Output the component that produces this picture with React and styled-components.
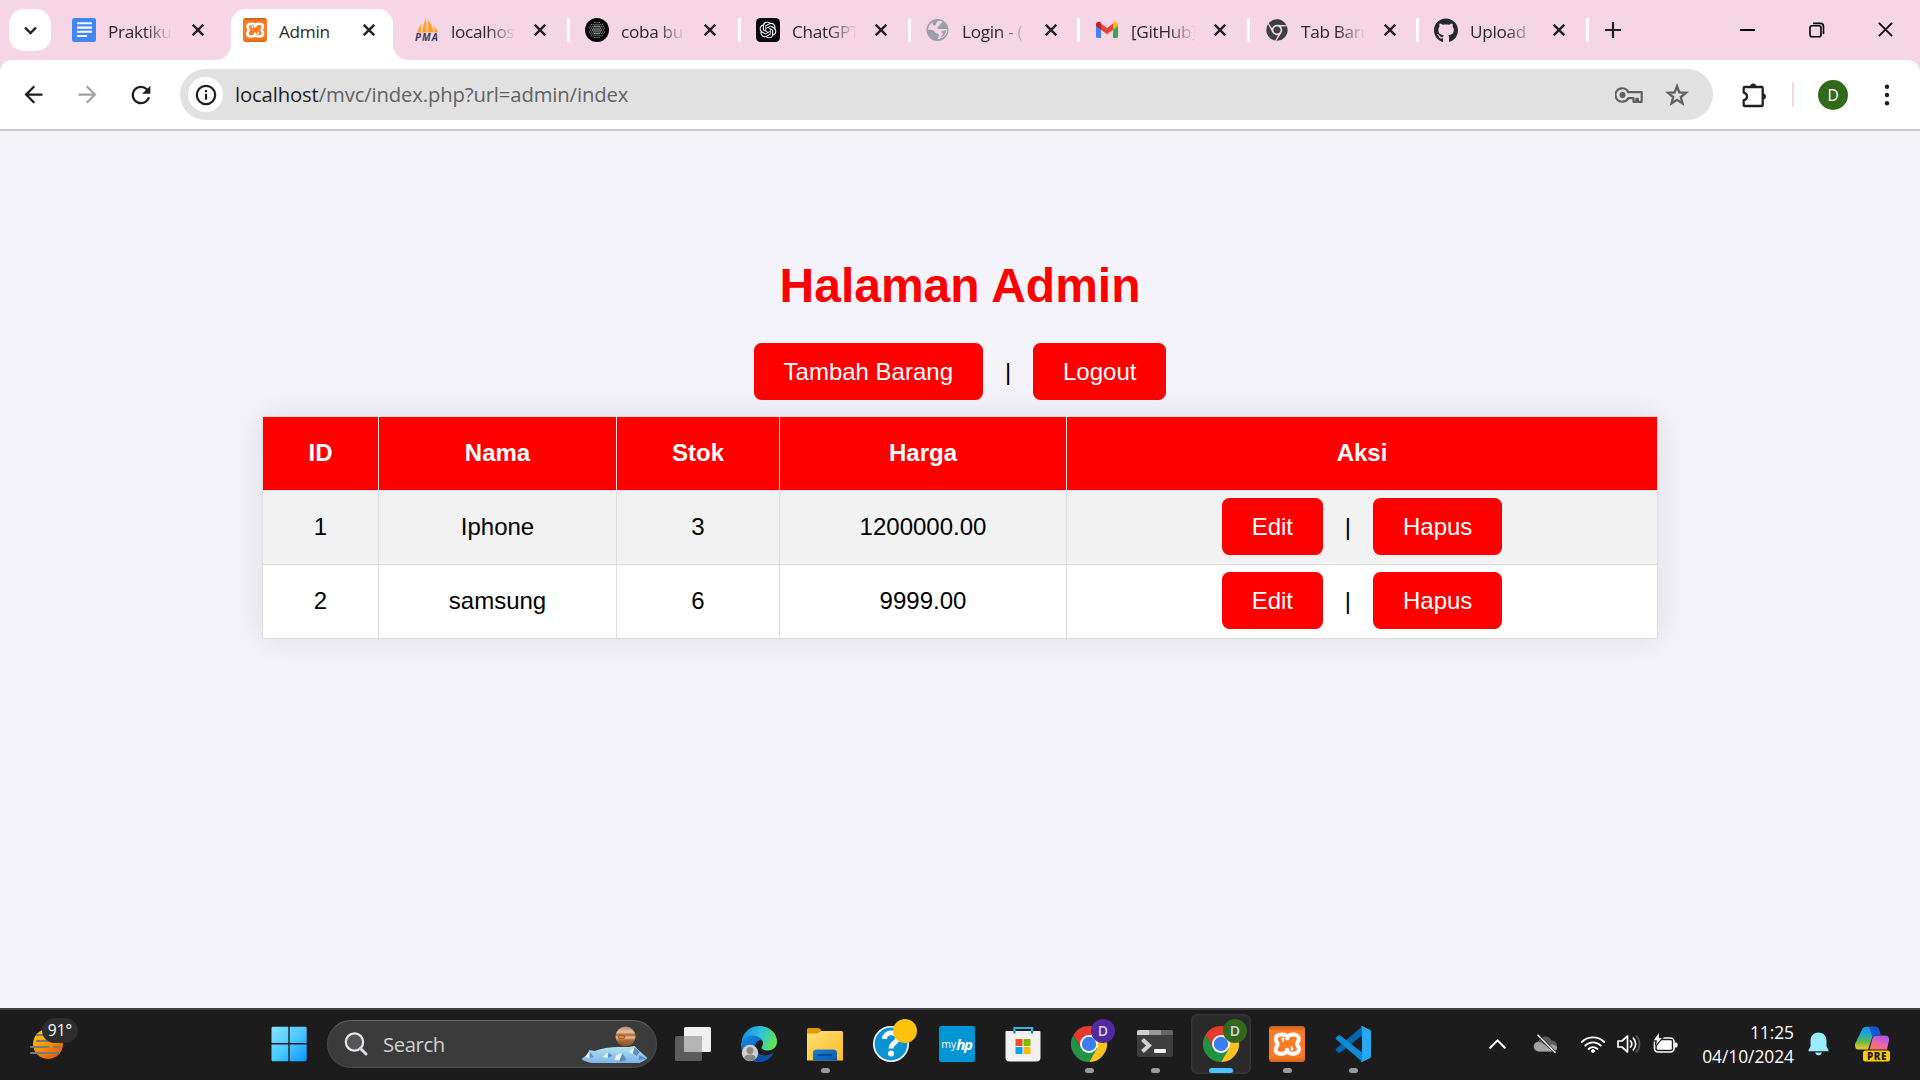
import React from "react";
import styled, { createGlobalStyle, css } from "styled-components";
import { SiOpenai } from "react-icons/si";
import { FaGithub, FaChrome } from "react-icons/fa";
import { MdArrowBack, MdArrowForward, MdRefresh } from "react-icons/md";

const Global = createGlobalStyle`
  * { box-sizing: border-box; }
  body { margin: 0; overflow: hidden; background: #f4f3f9; }
`;

const ui = `"Open Sans", "Noto Sans", sans-serif`;
const page = `"Liberation Sans", Arial, sans-serif`;

const Screen = styled.div`
  width: 1920px;
  height: 1080px;
  display: flex;
  flex-direction: column;
  font-family: ${ui};
`;

/* ---------- browser frame ---------- */
const Frame = styled.header`
  background: #f6d5e4;
  flex: none;
`;
const TabStrip = styled.div`
  height: 60px;
  display: flex;
  align-items: flex-start;
  padding: 9px 0 0 9px;
`;
const TabSearch = styled.div`
  width: 42px;
  height: 42px;
  border-radius: 15px;
  background: #fff;
  display: flex;
  align-items: center;
  justify-content: center;
  margin-right: 5.5px;
`;
const Tab = styled.div`
  position: relative;
  flex: none;
  width: ${(p) => p.$w}px;
  height: 51px;
  display: flex;
  align-items: center;
  padding: 0 0 9px 15.5px;
  ${(p) =>
    p.$active &&
    css`
      width: ${p.$w - 10}px;
      margin: 0 6.5px 0 3.5px;
      padding-left: 12px;
      background: #fff;
      border-radius: 15px 15px 0 0;
      &::before,
      &::after {
        content: "";
        position: absolute;
        bottom: 0;
        width: 15px;
        height: 15px;
      }
      &::before {
        left: -15px;
        background: radial-gradient(circle at 0 0, transparent 14.5px, #fff 15px);
      }
      &::after {
        right: -15px;
        background: radial-gradient(circle at 100% 0, transparent 14.5px, #fff 15px);
      }
    `}
`;
const Favicon = styled.span`
  width: 24px;
  height: 24px;
  margin-right: 12px;
  flex: none;
  display: flex;
  align-items: center;
  justify-content: center;
`;
const TabLabel = styled.span`
  width: 66px;
  height: 28px;
  margin-right: ${(p) => (p.$line ? 10.5 : 12)}px;
  padding-top: 3px;
  line-height: 25px;
  font-size: 17.2px;
  letter-spacing: -0.3px;
  color: #28282c;
  white-space: nowrap;
  ${(p) => p.$fade && `mask-image: linear-gradient(90deg, #000 55%, transparent 98%);`}
`;
const Close = styled.span`
  width: 24px;
  height: 24px;
  flex: none;
  display: flex;
  align-items: center;
  justify-content: center;
`;
const TabDivider = styled.span`
  width: 2.5px;
  height: 24px;
  margin-left: auto;
  border-radius: 1px;
  background: #fff;
`;
const NewTab = styled.span`
  width: 48px;
  height: 42px;
  display: flex;
  align-items: center;
  justify-content: center;
`;
const WindowControls = styled.div`
  margin-left: auto;
  display: flex;
`;
const WindowButton = styled.span`
  width: 69px;
  height: 41px;
  display: flex;
  align-items: center;
  justify-content: center;
`;

const Toolbar = styled.div`
  height: 71px;
  background: #fff;
  border-radius: 12px 12px 0 0;
  border-bottom: 2px solid #c9c9cb;
  display: flex;
  align-items: center;
  padding: 0 6px;
`;
const ToolButton = styled.span`
  width: 54px;
  height: 54px;
  display: flex;
  align-items: center;
  justify-content: center;
  color: ${(p) => p.$color || "#1f1f23"};
`;
const Address = styled.div`
  width: 1533px;
  height: 51px;
  margin: 0 14px 0 12px;
  border-radius: 26px;
  background: #e1e1e1;
  display: flex;
  align-items: center;
  padding: 0 12px 0 8px;
`;
const SiteInfo = styled.span`
  width: 35px;
  height: 35px;
  border-radius: 50%;
  background: #fff;
  display: flex;
  align-items: center;
  justify-content: center;
  margin-right: 12px;
`;
const Url = styled.span`
  flex: 1;
  font-size: 20.3px;
  letter-spacing: -0.14px;
  line-height: 48px;
  padding-bottom: 2px;
  color: #626266;
  b {
    font-weight: 400;
    color: #1f1f23;
  }
`;
const AddressIcon = styled.span`
  width: 48px;
  display: flex;
  justify-content: center;
  color: #5f6063;
`;
const ExtDivider = styled.span`
  width: 2.5px;
  height: 24px;
  background: #f6d5e4;
  margin: 0 24px 0 10.5px;
`;
const Avatar = styled.span`
  width: 30px;
  height: 30px;
  border-radius: 50%;
  background: #32691b;
  color: #fff;
  font-size: 15.5px;
  line-height: 30px;
  text-align: center;
  margin-right: 12px;
`;

/* ---------- page ---------- */
const Page = styled.main`
  flex: 1;
  background: #f4f3f9;
  font-family: ${page};
  font-size: 24px;
  color: #000;
  display: flex;
  flex-direction: column;
  align-items: center;
  padding-top: 127px;
`;
const Title = styled.h1`
  margin: 0 0 30px;
  height: 55px;
  line-height: 55px;
  font-size: 48px;
  color: #f00;
`;
const Actions = styled.div`
  display: flex;
  align-items: center;
  justify-content: center;
  height: 57px;
  white-space: pre;
`;
const Button = styled.a`
  height: 57px;
  line-height: 57px;
  padding: 0 30px;
  border-radius: 7.5px;
  background: #f00;
  color: #fff;
`;
const Bar = styled.span`
  width: 50px;
  text-align: center;
`;
const Table = styled.table`
  width: 1396px;
  margin-top: 16px;
  table-layout: fixed;
  border-collapse: collapse;
  background: #fff;
  box-shadow: 0 0 30px rgba(0, 0, 0, 0.1);
  td,
  th {
    height: 74px;
    padding: 0 0 2px;
    border: 1px solid #ddd;
    text-align: center;
  }
  th {
    background: #f00;
    color: #fff;
  }
  tbody tr:nth-child(odd) {
    background: #f2f2f2;
  }
`;
const Col = styled.col`
  width: ${(p) => p.$w}px;
`;

/* ---------- taskbar ---------- */
const Taskbar = styled.footer`
  height: 72px;
  flex: none;
  background: #1c1c1c;
  border-top: 2px solid #404040;
  padding-bottom: 2px;
  display: flex;
  align-items: center;
`;
const Weather = styled.div`
  position: relative;
  width: 256px;
  height: 68px;
  padding: 18px 0 0 30px;
`;
const Temp = styled.span`
  position: absolute;
  left: 42px;
  top: 8px;
  width: 36px;
  height: 25px;
  border-radius: 13px;
  background: #2d2d2d;
  color: #fff;
  font-size: 15.5px;
  line-height: 24px;
  text-align: center;
`;
const Task = styled.div`
  position: relative;
  width: 60px;
  height: 60px;
  margin: 0 3px;
  border-radius: 7px;
  display: flex;
  align-items: center;
  justify-content: center;
  ${(p) => p.$active && `background: #2a2a2a; box-shadow: inset 0 0 0 1.5px #363636;`}
`;
const Indicator = styled.span`
  position: absolute;
  bottom: 1px;
  left: ${(p) => (p.$active ? 18 : 25.5)}px;
  width: ${(p) => (p.$active ? 24 : 9)}px;
  height: 5px;
  border-radius: 3px;
  background: ${(p) => (p.$active ? "#4cc2ff" : "#9a9a9a")};
`;
const Profile = styled.span`
  position: absolute;
  right: 4px;
  top: 5px;
  width: 24px;
  height: 24px;
  border-radius: 50%;
  background: ${(p) => p.$color};
  color: #d9d3e6;
  font-size: 14px;
  font-weight: 600;
  line-height: 24px;
  text-align: center;
`;
const SearchBox = styled.div`
  width: 330px;
  height: 48px;
  margin: 0 3px 0 5px;
  border-radius: 24px;
  background: #3b3b3b;
  border: 1.5px solid #4b4b4b;
  border-top-color: #626262;
  display: flex;
  align-items: center;
  padding-left: 16px;
  color: #d0d0d0;
  font-size: 20.3px;
  letter-spacing: -0.4px;
  span {
    flex: 1;
    padding: 0 0 1px 15px;
  }
`;
const AppList = styled.div`
  display: flex;
`;
const HpTile = styled.span`
  width: 36px;
  height: 36px;
  border-radius: 2px;
  background: #0096d6;
  color: #fff;
  display: flex;
  align-items: center;
  justify-content: center;
  font-size: 10.5px;
  b {
    font-style: italic;
    font-size: 15px;
    font-weight: 700;
    letter-spacing: -1.2px;
    margin-right: 1px;
  }
`;
const XamppTile = styled.span`
  width: ${(p) => p.$s}px;
  height: ${(p) => p.$s}px;
  border-radius: 3px;
  background: linear-gradient(#c8611c, #fb7a24 15%, #fb7a24 85%, #d8651a);
  display: flex;
  align-items: center;
  justify-content: center;
`;
const Tray = styled.div`
  margin-left: auto;
  padding-right: 18px;
  display: flex;
  align-items: center;
`;
const TrayCell = styled.span`
  width: ${(p) => p.$w}px;
  display: flex;
  justify-content: center;
`;
const CloudCell = styled(TrayCell)`
  margin-right: 6px;
`;
const Clock = styled.div`
  width: 111px;
  text-align: right;
  color: #fff;
  font-size: 17.4px;
  line-height: 24px;
  letter-spacing: -0.05px;
`;

/* ---------- drawings ---------- */
const X = ({ s = 12, w = 2.4, c = "#202124" }) => (
  <svg width={s} height={s} viewBox="0 0 12 12" stroke={c} strokeWidth={w} fill="none">
    <path d="M.7 .7L11.3 11.3M11.3 .7L.7 11.3" />
  </svg>
);

const Docs = () => (
  <svg width="24" height="24">
    <rect width="24" height="24" rx="2.5" fill="#4285f4" />
    <path d="M5 5.3h15M5 9.6h15M5 13.8h15M5 18h10" stroke="#fff" strokeWidth="2.1" />
  </svg>
);

const Xampp = ({ s }) => (
  <XamppTile $s={s}>
    <svg width={s} height={s} viewBox="0 0 36 36" fill="none" stroke="#fff" strokeWidth="4" strokeLinejoin="round">
      <path d="M18.300 12.500C18 9.800 16 8.600 13 8.600 9.300 8.600 6.800 10.200 6.800 13.200 6.800 15.600 8.600 16.400 8.600 18.200 8.600 20 6.600 20.800 6.600 23.500 6.600 26.400 9 27.800 12.500 27.800 15.800 27.800 17.800 26.500 18.100 23.800 18.500 26.500 20.300 27.800 23.500 27.800 27.200 27.800 30 26.200 30 23 30 20.300 28 19.800 28 18 28 16.200 29.800 15.400 29.800 12.800 29.800 10 27.200 8.600 24 8.600 21 8.600 18.800 9.800 18.300 12.500Z" />
      <path d="M12.500 12.800h1.600v3M22.700 20.500v3h1.600" strokeWidth="2" />
    </svg>
  </XamppTile>
);

const Pma = () => (
  <svg width="26" height="24" viewBox="0 0 26 24" style={{ overflow: "visible" }}>
    <path d="M8 14.500Q9 6 12 0Q13 8 12.500 14.500zM13.500 14.500Q14.500 9 14 2Q19 8 19.500 14.500zM3.500 14.500Q4 10 7.500 6Q7 11 7 14.500zM20.500 14.500Q21 11 19 7Q23 11 24 14.500z" fill="#f9a12e" />
    <text x="1" y="23.300" fontFamily="Open Sans, sans-serif" fontSize="9.800" fontWeight="700" fontStyle="italic" fill="#373a68" textLength="23">PMA</text>
  </svg>
);

const Dots = () => {
  const pts = [];
  for (let i = -4; i <= 4; i++)
    for (let j = -4; j <= 4; j++) {
      const x = i * 2.1 + (j % 2 ? 1.05 : 0);
      const y = j * 1.9;
      if (Math.hypot(x, y) < 8.2) pts.push([x, y]);
    }
  return (
    <svg width="24" height="24" viewBox="-12 -12 24 24">
      <circle r="12" fill="#050505" />
      {pts.map(([x, y], i) => (
        <circle key={i} cx={x} cy={y} r={Math.hypot(x, y) < 5 ? 0.7 : 0.5} fill="#f2f2f2" />
      ))}
    </svg>
  );
};

const Gpt = () => (
  <svg width="24" height="24">
    <rect width="24" height="24" rx="4.500" fill="#0b0b0d" />
    <g transform="translate(3.500 3.500)">
      <SiOpenai size={17} color="#fff" />
    </g>
  </svg>
);

const Globe = () => (
  <svg width="24" height="24" viewBox="0 0 24 24">
    <circle cx="11.500" cy="12" r="11" fill="#9aa0a6" />
    <path d="M12.500 2.800c2 .1 3.200.4 3.800 1-.5 1.700-2 1.500-2.300 3-.3 1.400-2.200 1-2.500 2.500s1.200 1.700 3 1.700c2.500 0 4.700.3 6.800-.3.300 4-1.500 7-4.800 9-1.500.8-3 1.300-4.700 1.300-.6-2 1.700-2.500 1.200-4-.8-2-4-1.200-4.500-3.500-.2-1.500-3.500-1.500-6.200-1.700C2 8.500 4 5.500 7 4c-.5 1.800-.3 3.500 1.300 3.500 1.700 0 1.500-1.500 2-2.500s1.400-1.200 2.200-2.200z" fill="#f6d5e4" />
    <path d="M15 13.500c2 0 4-1 5.500-2-.5 4-2.500 7-6 8 .5-2 2.700-2.500 2.400-4-.2-1-1.900-.8-1.900-2z" fill="#9aa0a6" />
  </svg>
);

const Gmail = () => (
  <svg width="24" height="24" viewBox="0 0 24 24">
    <path d="M1 7v11.500A1.500 1.500 0 002.500 20H6v-9.500z" fill="#4285f4" />
    <path d="M23 7v11.500a1.500 1.500 0 01-1.500 1.500H18v-9.500z" fill="#34a853" />
    <path d="M6 5.500l6 4.500 6-4.500v6.300l-6 4.500-6-4.500z" fill="#ea4335" />
    <path d="M1 6.500C1 4 3.700 3 5.500 4.300L6 4.700v7.100L1 8z" fill="#c5221f" />
    <path d="M23 6.500c0-2.500-2.700-3.500-4.500-2.200l-.5.400v7.100L23 8z" fill="#fbbc04" />
  </svg>
);

const Restore = () => (
  <svg width="16" height="16" fill="none" stroke="#000" strokeWidth="1.600">
    <rect x="1" y="3.800" width="11" height="11" rx="2" />
    <path d="M4 1.400h7.500a3 3 0 013 3V12" />
  </svg>
);

const Info = () => (
  <svg width="22" height="22" viewBox="0 0 22 22" fill="none" stroke="#1f1f23" strokeWidth="2.200">
    <circle cx="11" cy="11" r="9.200" />
    <path d="M11 9.800v6M11 6v2.200" />
  </svg>
);

const Key = () => (
  <svg width="28" height="18" viewBox="0 0 28 18" fill="none" stroke="#5f6063" strokeWidth="2.200">
    <path d="M13.300 6.200A6.700 6.700 0 107.700 15.700a6.700 6.700 0 005.600-3.500h5.200v3.600h2.800v-3h1.600v3H26.700V6.200z" strokeLinejoin="round" />
    <circle cx="7.500" cy="9" r="3" fill="#5f6063" stroke="none" />
  </svg>
);

const Star = () => (
  <svg width="26" height="26" viewBox="0 0 26 26" fill="none" stroke="currentColor" strokeWidth="2.300">
    <path d="M13 4.200l2.300 6.200 6.700.4-5.200 4.200 1.700 6.400L13 17.800l-5.500 3.600 1.700-6.400L4 10.800l6.700-.4z" />
  </svg>
);

const Puzzle = () => (
  <svg width="26" height="26" viewBox="0 0 26 26">
    <path d="M3.700 5h17q1 0 1 1v17q0 1-1 1h-17q-1 0-1-1v-4.800q3.300-.8 3.300-3.800t-3.300-3.800V6q0-1 1-1z" fill="none" stroke="#1f1f23" strokeWidth="2.300" strokeLinejoin="round" />
    <path d="M9.300 4.500a2.900 2.900 0 015.800 0zM22 11.500a2.900 2.900 0 010 5.800z" fill="#1f1f23" />
  </svg>
);

const Sun = () => (
  <svg width="34" height="32" viewBox="0 0 34 32">
    <defs>
      <linearGradient id="sun" x1="0" y1="0" x2=".7" y2="1">
        <stop offset="0" stopColor="#ffdc00" />
        <stop offset="1" stopColor="#ea5a0c" />
      </linearGradient>
    </defs>
    <circle cx="18" cy="16" r="15" fill="url(#sun)" />
    <path d="M7 7h14M7 13h15M1 19h17M24 19h5M1 25h28" stroke="#7d7874" strokeWidth="2.200" strokeLinecap="round" />
  </svg>
);

const Windows = () => (
  <svg width="36" height="36" viewBox="0 0 36 36">
    <defs>
      <linearGradient id="win" x1="0" y1="0" x2="1" y2="1">
        <stop offset="0" stopColor="#86e2ff" />
        <stop offset=".5" stopColor="#4bcaff" />
        <stop offset="1" stopColor="#0a93ff" />
      </linearGradient>
    </defs>
    <path d="M1.500 .7h15.800v16.300H.5V1.700zM18.700 .7h16l1 1v15.300h-17zM.5 18.500h16.800v16.700H1.500l-1-1zM18.700 18.500h17v15.700l-1 1h-16z" fill="url(#win)" />
  </svg>
);

const Magnifier = () => (
  <svg width="24" height="24" viewBox="0 0 24 24">
    <circle cx="10.500" cy="10" r="8.700" fill="#555" stroke="#e4e8ec" strokeWidth="2.200" />
    <path d="M16.500 16.500l5.500 5.500" stroke="#d5dce2" strokeWidth="3" strokeLinecap="round" />
  </svg>
);

const Planet = () => (
  <svg width="76" height="44" viewBox="0 0 76 44">
    <defs>
      <linearGradient id="ice" x1="0" y1="0" x2="0" y2="1">
        <stop offset="0" stopColor="#b4e4f0" />
        <stop offset="1" stopColor="#7fb4e8" />
      </linearGradient>
      <linearGradient id="jup" x1="0" y1="0" x2="0" y2="1">
        <stop offset="0" stopColor="#b98467" />
        <stop offset=".28" stopColor="#e8c2a2" />
        <stop offset=".42" stopColor="#a9673a" />
        <stop offset=".55" stopColor="#eab98a" />
        <stop offset=".68" stopColor="#b06a35" />
        <stop offset="1" stopColor="#7a4d38" />
      </linearGradient>
    </defs>
    <g transform="translate(1.500 3)">
      <path d="M0 34l5-4 3-5 5 1q11-4 24-4l10 0 6-1 5 5 8 7q-3 3-8 5H11q-7-1-11-4z" fill="url(#ice)" />
      <path d="M8 26l4 6-4 1zM27 27l4 4-5 2zM36 31l5-3 4 7-6 2zM53 22l5 5-3 4-4-3zM58 30l7 4-8 1z" fill="#5f8fbe" />
      <path d="M8 26l-4 6 4 1zM27 27l-6 5 5 1zM41 28l-6 2-2 5 5 0zM53 22l-6 5 4 2z" fill="#e6f6fb" />
      <circle cx="44" cy="11.500" r="10" fill="url(#jup)" />
      <ellipse cx="40" cy="12" rx="3.500" ry="1.700" fill="#c98a55" stroke="#8a4c22" strokeWidth=".8" />
    </g>
  </svg>
);

const TaskView = () => (
  <svg width="36" height="36" viewBox="0 0 36 36">
    <rect x="0" y="10" width="27" height="25" rx="1.500" fill="#5c5c5c" />
    <rect x="9" y="1" width="27" height="25" rx="1.500" fill="#f1f1f1" />
    <rect x="9" y="10" width="18" height="16" fill="#b5b5b5" />
  </svg>
);

const Edge = () => (
  <svg width="36" height="36" viewBox="0 0 36 36">
    <defs>
      <linearGradient id="e1" x1="0" y1=".3" x2="1" y2=".6">
        <stop offset="0" stopColor="#1690dc" />
        <stop offset=".5" stopColor="#2fc3dc" />
        <stop offset="1" stopColor="#64e34a" />
      </linearGradient>
      <linearGradient id="e2" x1="0" y1="0" x2="1" y2="1">
        <stop offset="0" stopColor="#128be0" />
        <stop offset="1" stopColor="#0f4ba0" />
      </linearGradient>
    </defs>
    <path d="M1 13C3.500 4.500 10.500 0 18.500 0 29 0 36 7.500 36 15.500c0 5.500-4 9-9 9-4 0-6.500-1.500-6.500-3 0-1.200 1.500-1.700 1.500-4 0-4-4-6.500-9-6.500-6 0-9.500 3-12 7z" fill="url(#e1)" />
    <path d="M0 18c1.500-5.500 6-8.500 11.500-8.500 5 0 8.500 2.500 10 5-3-1-7.500 1-7.500 6.500 0 5 4.500 8.700 10 8.700 3.500 0 6-1.200 8.500-2.600C29.500 32.500 25 36 18 36 8 36-.5 28 0 18z" fill="url(#e2)" />
    <path d="M14 21c0 5 4.500 8.700 10 8.700 3.500 0 6-1.200 8.500-2.600C29.500 32.500 25 36 18 36c-7-2-8-10-4-15z" fill="#0d50a5" />
    <circle cx="9" cy="27" r="8.200" fill="#d3cfcc" />
    <circle cx="9" cy="24.500" r="3.500" fill="#8a8682" />
    <path d="M3.300 32.500c0-3 2.200-4 5.700-4s5.700 1 5.700 4c-3 3.200-8.400 3.200-11.400 0z" fill="#8a8682" />
  </svg>
);

const Folder = () => (
  <svg width="36" height="36" viewBox="0 0 36 36">
    <defs>
      <linearGradient id="fold" x1="0" y1="0" x2="1" y2="1">
        <stop offset="0" stopColor="#ffdf78" />
        <stop offset="1" stopColor="#fbbd24" />
      </linearGradient>
      <linearGradient id="foldb" x1="0" y1="0" x2="1" y2="1">
        <stop offset="0" stopColor="#1583d8" />
        <stop offset="1" stopColor="#0a58aa" />
      </linearGradient>
    </defs>
    <path d="M0 3.500Q0 2 1.500 2H11q1.500 0 2.500 1.500L15.500 6V12H0z" fill="#dd9c05" />
    <path d="M0 7.500h10.500l4-2.500H34.500Q36 5 36 6.500V34.500H0z" fill="url(#fold)" />
    <path d="M6 34.500V27q0-3.500 3.500-3.500h17Q30 23.500 30 27v7.500z" fill="url(#foldb)" />
    <path d="M11 29h14" stroke="#0a3f80" strokeWidth="1.500" strokeLinecap="round" />
  </svg>
);

const Help = () => (
  <svg width="48" height="48" viewBox="0 0 48 48" style={{ overflow: "visible" }}>
    <circle cx="24" cy="24" r="17.200" fill="#0b94d3" stroke="#fff" strokeWidth="1.600" />
    <path d="M17.500 19c0-8 13-8 13-1 0 5-6.500 5-6.500 10.500" fill="none" stroke="#fff" strokeWidth="4.800" />
    <circle cx="24" cy="33.500" r="3" fill="#fff" />
    <circle cx="38" cy="11" r="12" fill="#fec10d" />
  </svg>
);

const Store = () => (
  <svg width="36" height="36" viewBox="0 0 36 36">
    <path d="M9.500 7.500V2H27v5.500" fill="none" stroke="#2fb4e8" strokeWidth="2.200" />
    <path d="M.5 6Q.5 5 1.500 5h33q1 0 1 1v25.500q0 4-4 4h-27q-4 0-4-4z" fill="#f1f1f1" />
    <path d="M9.500 5v2.500M27 5v2.500" stroke="#1685c8" strokeWidth="2.200" />
    <path d="M10.500 13h7v7h-7z" fill="#f25022" />
    <path d="M18.500 13h7v7h-7z" fill="#7fba00" />
    <path d="M10.500 21h7v7h-7z" fill="#00a4ef" />
    <path d="M18.500 21h7v7h-7z" fill="#ffb900" />
  </svg>
);

const Chrome = () => (
  <svg width="36" height="36" viewBox="-18 -18 36 36">
    <path d="M-15.590 -9A18 18 0 0115.590 -9L0 -9L0 0L-7.790 4.500z" fill="#e33b2e" />
    <path d="M15.590 -9A18 18 0 010 18L7.790 4.500L0 0L0 -9z" fill="#fcc31e" />
    <path d="M0 18A18 18 0 01-15.590 -9L-7.790 4.500L0 0L7.790 4.500z" fill="#229342" />
    <circle r="9" fill="#fff" />
    <circle r="7.200" fill="#3b7ded" />
  </svg>
);

const Terminal = () => (
  <svg width="36" height="36" viewBox="0 0 36 36">
    <rect y="4" width="36" height="27" rx="2" fill="#3e3e3e" />
    <path d="M0 9V6q0-2 2-2h10v5z" fill="#cfcfcf" />
    <path d="M12 4h12v5H12z" fill="#999" />
    <path d="M24 4h10q2 0 2 2v3H24z" fill="#666" />
    <path d="M5.500 13.500l6.500 6-6.500 6" fill="none" stroke="#d2d2d2" strokeWidth="4" />
    <rect x="17" y="23" width="12" height="4" rx="1" fill="#f4f4f4" />
  </svg>
);

const Code = () => (
  <svg width="36" height="36" viewBox="0 0 36 36">
    <path d="M27 0.500L27 9.500 5 26.800 3.500 26.800 .7 24.300V23z" fill="#0069ac" />
    <path d="M27 35.500L27 26.500 5 9.200 3.500 9.200 .7 11.700V13z" fill="#0d8bd6" />
    <path d="M27 0l7.800 3.700Q36 4.300 36 5.700v24.600q0 1.400-1.200 2L27 36q-.8 0-1.500-.7Q27 35.500 27 34V2Q27 .5 25.500 .7 26.200 0 27 0z" fill="#27a9f2" />
  </svg>
);

const CloudOff = () => (
  <svg width="25" height="20" viewBox="0 0 25 20">
    <path d="M5.500 17.500a5 5 0 010-10 7 7 0 0113-1 5.600 5.600 0 011.500 11z" fill="#5e5e5e" />
    <path d="M5.500 17.500a5 5 0 01-2-9.300q4-1 7 2l4 2.300q5-4 9.500.5.500 4-4 4.500z" fill="#a3a3a3" />
    <path d="M4.500 .8L22.500 18.800" stroke="#1c1c1c" strokeWidth="2.800" />
    <path d="M4.500 .8L22.500 18.800" stroke="#fff" strokeWidth="1.400" />
  </svg>
);

const Wifi = () => (
  <svg width="26" height="20" viewBox="0 0 26 20" fill="none" stroke="#fff" strokeWidth="1.800" strokeLinecap="round">
    <path d="M1.800 8a15.800 15.800 0 0122.400 0M5.200 11.600a11 11 0 0115.600 0M8.600 15a6.200 6.200 0 018.800 0" />
    <circle cx="13" cy="17" r="1.500" fill="#fff" stroke="#fff" strokeWidth="1" />
  </svg>
);

const Volume = () => (
  <svg width="26" height="20" viewBox="0 0 26 20" fill="none" stroke="#fff" strokeWidth="1.700" strokeLinecap="round" strokeLinejoin="round">
    <path d="M2 7h4l5.500-5v16L6 13H2zM14.500 7a4.500 4.500 0 010 6M17.300 4.200a8.300 8.300 0 010 11.600" />
    <path d="M20.300 1.800a12 12 0 010 16.400" stroke="#555" />
  </svg>
);

const Battery = () => (
  <svg width="25" height="22" viewBox="0 0 25 22">
    <rect x="1.500" y="5" width="19.500" height="14" rx="3.500" fill="none" stroke="#fff" strokeWidth="1.700" />
    <rect x="3.800" y="7.300" width="15" height="9.500" rx="1" fill="#fff" />
    <path d="M21.500 9.500h1.500q1.500 0 1.500 1.500v2q0 1.500-1.500 1.500h-1.500z" fill="#fff" />
    <path d="M6 0L.8 7.200H4L3 12 8.800 5H5.800z" fill="#fff" stroke="#1c1c1c" strokeWidth="2.400" paintOrder="stroke" />
  </svg>
);

const Bell = () => (
  <svg width="21" height="24" viewBox="0 0 21 24">
    <path d="M10.500 .5c5 0 8 3.500 8 8.500v5.500l2 3.500v1.200H.5V18l2-3.500V9c0-5 3-8.500 8-8.500z" fill="#99ebff" />
    <path d="M7 20.500h7q-1 2.700-3.500 2.700T7 20.500z" fill="#99ebff" />
  </svg>
);

const Copilot = () => (
  <svg width="36" height="36" viewBox="0 0 36 36">
    <defs>
      <linearGradient id="cp1" x1=".3" y1="0" x2=".3" y2="1">
        <stop offset="0" stopColor="#1a8ff0" />
        <stop offset=".35" stopColor="#1fa8c9" />
        <stop offset=".65" stopColor="#63b84a" />
        <stop offset="1" stopColor="#f3cb1b" />
      </linearGradient>
      <linearGradient id="cp2" x1=".7" y1="0" x2=".2" y2="1">
        <stop offset="0" stopColor="#a855f0" />
        <stop offset=".5" stopColor="#e463b4" />
        <stop offset="1" stopColor="#ff7a4a" />
      </linearGradient>
    </defs>
    <path d="M8.500 2.500Q9.500 .8 12 .8h9.500q2.500 0 3.300 2.500L26.500 9H22q-3 0-4 3l-4 11.500H4.500Q.5 23.500 1 18z" fill="url(#cp1)" />
    <path d="M15 .8h6.500q2.500 0 3.300 2.500L26.500 9H22q-2.500 0-3.500 2z" fill="#1257d8" />
    <path d="M21.500 9.500h9.500q4.500 0 4 5l-2 9H15.500l3-11q1-3 3-3z" fill="url(#cp2)" />
    <rect x="9" y="24.500" width="27" height="11" rx="2.500" fill="#ffc70f" />
    <text x="13" y="33.700" fontFamily="Open Sans, sans-serif" fontSize="9.800" fontWeight="800" fill="#222" textLength="19.500">PRE</text>
  </svg>
);

/* ---------- data ---------- */
const tabs = [
  { w: 171, icon: <Docs />, label: "Praktiku", fade: true },
  { w: 172, icon: <Xampp s={24} />, label: "Admin", active: true },
  { w: 170, icon: <Pma />, label: "localhos", fade: true, line: true },
  { w: 171, icon: <Dots />, label: "coba bu", fade: true, line: true },
  { w: 170, icon: <Gpt />, label: "ChatGPT", fade: true, line: true },
  { w: 169, icon: <Globe />, label: "Login - (", fade: true, line: true },
  { w: 170, icon: <Gmail />, label: "[GitHub]", fade: true, line: true },
  { w: 169, icon: <FaChrome size={22} color="#3c4043" />, label: "Tab Baru", fade: true, line: true },
  { w: 170, icon: <FaGithub size={25} color="#24292f" />, label: "Upload", fade: true, line: true },
];

const items = [
  { id: 1, nama: "Iphone", stok: 3, harga: "1200000.00" },
  { id: 2, nama: "samsung", stok: 6, harga: "9999.00" },
];

const apps = [
  { icon: <TaskView /> },
  { icon: <Edge /> },
  { icon: <Folder />, running: true },
  { icon: <Help /> },
  { icon: <HpTile>my<b>hp</b></HpTile> },
  { icon: <Store /> },
  { icon: <Chrome />, running: true, profile: "#5129a0" },
  { icon: <Terminal />, running: true },
  { icon: <Chrome />, running: true, active: true, profile: "#32691b" },
  { icon: <Xampp s={36} />, running: true },
  { icon: <Code />, running: true },
];

export default function App() {
  return (
    <Screen>
      <Global />
      <Frame>
        <TabStrip>
          <TabSearch>
            <svg width="13" height="9" fill="none" stroke="#1f1f23" strokeWidth="2.400">
              <path d="M1 1.500L6.500 7L12 1.500" />
            </svg>
          </TabSearch>
          {tabs.map((t) => (
            <Tab key={t.label} $w={t.w} $active={t.active}>
              <Favicon>{t.icon}</Favicon>
              <TabLabel $fade={t.fade} $line={t.line}>
                {t.label}
              </TabLabel>
              <Close>
                <X />
              </Close>
              {t.line && <TabDivider />}
            </Tab>
          ))}
          <NewTab>
            <svg width="16" height="16" stroke="#1f1f23" strokeWidth="2.200">
              <path d="M8 0v16M0 8h16" />
            </svg>
          </NewTab>
          <WindowControls>
            <WindowButton>
              <svg width="15" height="2">
                <rect width="15" height="2" />
              </svg>
            </WindowButton>
            <WindowButton>
              <Restore />
            </WindowButton>
            <WindowButton>
              <X s={15} w={1.4} c="#000" />
            </WindowButton>
          </WindowControls>
        </TabStrip>
        <Toolbar>
          <ToolButton>
            <MdArrowBack size={27} />
          </ToolButton>
          <ToolButton $color="#a3a3a5">
            <MdArrowForward size={27} />
          </ToolButton>
          <ToolButton>
            <MdRefresh size={28} />
          </ToolButton>
          <Address>
            <SiteInfo>
              <Info />
            </SiteInfo>
            <Url>
              <b>localhost</b>/mvc/index.php?url=admin/index
            </Url>
            <AddressIcon>
              <Key />
            </AddressIcon>
            <AddressIcon>
              <Star />
            </AddressIcon>
          </Address>
          <ToolButton>
            <Puzzle />
          </ToolButton>
          <ExtDivider />
          <Avatar>D</Avatar>
          <ToolButton>
            <svg width="6" height="22" fill="#1f1f23">
              <circle cx="3" cy="2.800" r="2.200" />
              <circle cx="3" cy="11" r="2.200" />
              <circle cx="3" cy="19.200" r="2.200" />
            </svg>
          </ToolButton>
        </Toolbar>
      </Frame>

      <Page>
        <Title>Halaman Admin</Title>
        <Actions>
          <Button>Tambah Barang</Button>
          <Bar>|</Bar>
          <Button>Logout</Button>
        </Actions>
        <Table>
          <colgroup>
            {[116, 238, 163, 287, 591].map((w) => (
              <Col key={w} $w={w} />
            ))}
          </colgroup>
          <thead>
            <tr>
              <th>ID</th>
              <th>Nama</th>
              <th>Stok</th>
              <th>Harga</th>
              <th>Aksi</th>
            </tr>
          </thead>
          <tbody>
            {items.map((r) => (
              <tr key={r.id}>
                <td>{r.id}</td>
                <td>{r.nama}</td>
                <td>{r.stok}</td>
                <td>{r.harga}</td>
                <td>
                  <Actions>
                    <Button>Edit</Button>
                    <Bar>|</Bar>
                    <Button>Hapus</Button>
                  </Actions>
                </td>
              </tr>
            ))}
          </tbody>
        </Table>
      </Page>

      <Taskbar>
        <Weather>
          <Sun />
          <Temp>91°</Temp>
        </Weather>
        <Task>
          <Windows />
        </Task>
        <SearchBox>
          <Magnifier />
          <span>Search</span>
          <Planet />
        </SearchBox>
        <AppList>
          {apps.map((a, i) => (
            <Task key={i} $active={a.active}>
              {a.icon}
              {a.profile && <Profile $color={a.profile}>D</Profile>}
              {a.running && <Indicator $active={a.active} />}
            </Task>
          ))}
        </AppList>
        <Tray>
          <TrayCell $w={48}>
            <svg width="17" height="10" fill="none" stroke="#fff" strokeWidth="2" strokeLinecap="round">
              <path d="M1.200 8.700L8.500 1.400L15.800 8.700" />
            </svg>
          </TrayCell>
          <CloudCell $w={48}>
            <CloudOff />
          </CloudCell>
          <TrayCell $w={36}>
            <Wifi />
          </TrayCell>
          <TrayCell $w={36}>
            <Volume />
          </TrayCell>
          <TrayCell $w={36}>
            <Battery />
          </TrayCell>
          <Clock>
            <div>11:25</div>
            <div>04/10/2024</div>
          </Clock>
          <TrayCell $w={48}>
            <Bell />
          </TrayCell>
          <TrayCell $w={60}>
            <Copilot />
          </TrayCell>
        </Tray>
      </Taskbar>
    </Screen>
  );
}
